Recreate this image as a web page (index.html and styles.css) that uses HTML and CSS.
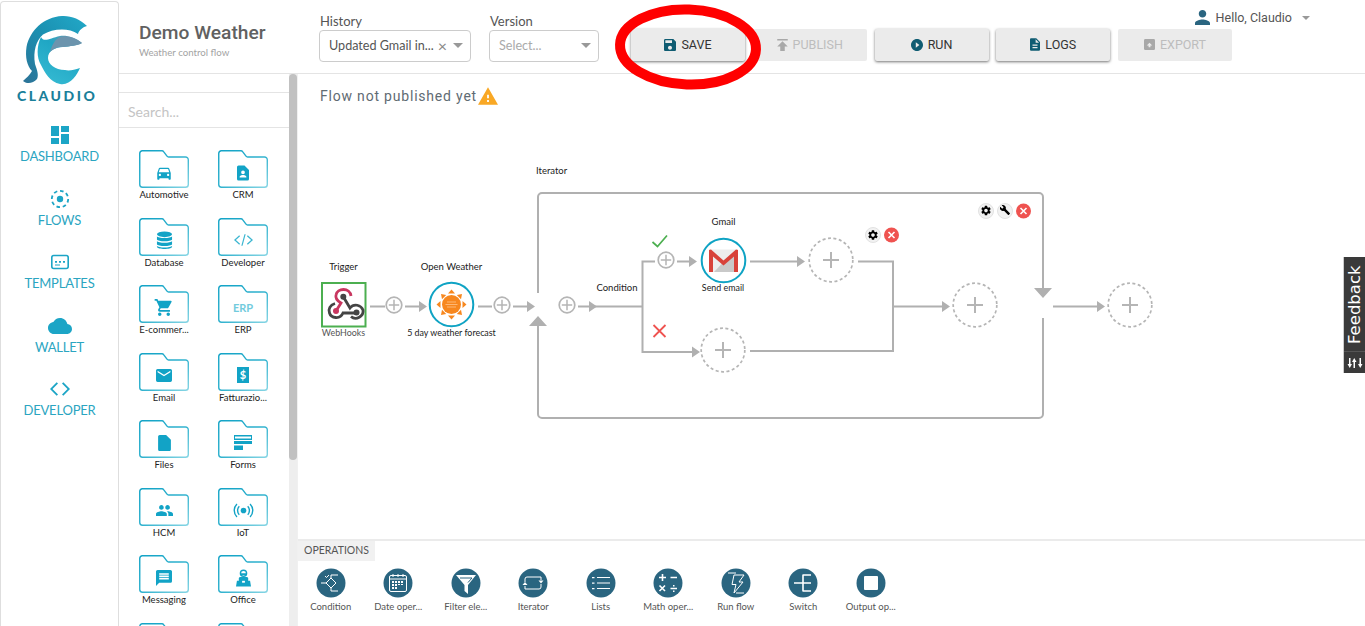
FILE: index.html
```html
<!DOCTYPE html>
<html lang="en">
<head>
<meta charset="utf-8">
<title>Demo Weather</title>
<link rel="stylesheet" href="styles.css">
</head>
<body>
<svg class="defs" width="0" height="0" aria-hidden="true">
  <defs>
    <linearGradient id="folderStroke" x1="0" y1="0" x2="1" y2="1">
      <stop offset="0" stop-color="#12a3c6"/><stop offset="0.5" stop-color="#2cb0cd"/><stop offset="1" stop-color="#86d5e4"/>
    </linearGradient>
    <linearGradient id="logoA" x1="1" y1="0" x2="0" y2="1">
      <stop offset="0" stop-color="#22a9c8"/><stop offset="0.5" stop-color="#1b8fb0"/><stop offset="1" stop-color="#2d7397"/>
    </linearGradient>
    <linearGradient id="logoB" x1="0.9" y1="0" x2="0.4" y2="1">
      <stop offset="0" stop-color="#6f9bb3"/><stop offset="0.35" stop-color="#1fa6c4"/><stop offset="1" stop-color="#33b8d1"/>
    </linearGradient>
    <symbol id="folder" viewBox="0 0 50 38">
      <path class="folder-line" d="M3 .75H23a2 2 0 0 1 1.6.9L28 6.2a2 2 0 0 0 1.6.8H46.5A2.8 2.8 0 0 1 49.3 9.8V34.5a2.8 2.8 0 0 1-2.8 2.8H3.5A2.8 2.8 0 0 1 .75 34.5V3.5A2.8 2.8 0 0 1 3 .75Z"/>
    </symbol>
    <symbol id="add" viewBox="0 0 18 18">
      <circle class="add-ring" cx="9" cy="9" r="7.8"/>
      <path class="add-cross" d="M9 3.8v10.4M3.8 9h10.4"/>
    </symbol>
    <symbol id="slot" viewBox="0 0 46 46">
      <circle class="slot-ring" cx="23" cy="23" r="21.8"/>
      <path class="slot-cross" d="M23 15v16M15 23h16"/>
    </symbol>
    <symbol id="gear" viewBox="0 0 24 24">
      <path d="M19.14 12.94c.04-.3.06-.61.06-.94 0-.32-.02-.64-.07-.94l2.03-1.58a.49.49 0 0 0 .12-.61l-1.92-3.32a.488.488 0 0 0-.59-.22l-2.39.96c-.5-.38-1.03-.7-1.62-.94l-.36-2.54a.484.484 0 0 0-.48-.41h-3.84c-.24 0-.43.17-.47.41l-.36 2.54c-.59.24-1.13.57-1.62.94l-2.39-.96c-.22-.08-.47 0-.59.22L2.74 8.87c-.12.21-.08.47.12.61l2.03 1.58c-.05.3-.09.63-.09.94s.02.64.07.94l-2.03 1.58a.49.49 0 0 0-.12.61l1.92 3.32c.12.22.37.29.59.22l2.39-.96c.5.38 1.03.7 1.62.94l.36 2.54c.05.24.24.41.48.41h3.84c.24 0 .44-.17.47-.41l.36-2.54c.59-.24 1.13-.56 1.62-.94l2.39.96c.22.08.47 0 .59-.22l1.92-3.32c.12-.22.07-.47-.12-.61l-2.01-1.58zM12 15.6c-1.98 0-3.6-1.62-3.6-3.6s1.62-3.6 3.6-3.6 3.6 1.62 3.6 3.6-1.62 3.6-3.6 3.6z"/>
    </symbol>
  </defs>
</svg>

<div class="app">
  <aside class="sidebar">
    <div class="brand">
      <svg class="logo" viewBox="22 14 68 70" width="68" height="70">
        <path fill="url(#logoA)" d="M87 25C80 18 71 14.500 62 15 44 16 30 29 26.500 46 25 56 27 65 32 70 30 74 26 77 23 80 26 83 33 83 37 78 39 74 37 69 35 63 33 50 36 40 43 33.500 52 28 68 26 78 33 79 29 83 26 87 25Z"/>
        <path fill="url(#logoB)" d="M82 42C75 36 66 34 60 35 50 37 44 42 41 36 37 44 36 56 41 64 45 72 50 81 60 83 70 85 77 74 80 67 74 69 69 70 65 69 55 69 48 63 48 57 48 50 55 46 63 46 70 45 77 45 82 42Z"/>
        <path class="logo-hi" d="M60 36C66 34 75 36 82 42 77 45 70 45 63 46 57 46 53 48 50 51 52 44 55 38 60 36Z"/>
      </svg>
      <div class="brand-name">CLAUDIO</div>
    </div>
    <nav class="nav">
      <a class="nav-item"><svg class="nav-icon" viewBox="3 3 18 18" width="18" height="18"><path d="M3 13h8V3H3v10zm0 8h8v-6H3v6zm10 0h8V11h-8v10zm0-18v6h8V3h-8z"/></svg><span>DASHBOARD</span></a>
      <a class="nav-item"><svg class="nav-icon" viewBox="0 0 20 20" width="20" height="20"><circle class="nav-dash" cx="10" cy="10" r="8.2"/><circle cx="10" cy="10" r="3.2"/></svg><span>FLOWS</span></a>
      <a class="nav-item"><svg class="nav-icon" viewBox="0 0 20 20" width="20" height="20"><rect class="nav-line" x="1.800" y="3.500" width="16.400" height="13" rx="2"/><path d="M5 9h2v1.800H5zM9 9h2v1.800H9zM13 9h2v1.800h-2zM5 12.500h5v1H5z"/></svg><span>TEMPLATES</span></a>
      <a class="nav-item"><svg class="nav-icon" viewBox="0 3 24 18" width="24" height="18"><path d="M19.35 10.040C18.670 6.590 15.640 4 12 4 9.110 4 6.600 5.640 5.350 8.040 2.340 8.360 0 10.910 0 14c0 3.310 2.690 6 6 6h13c2.760 0 5-2.240 5-5 0-2.640-2.050-4.780-4.650-4.960z"/></svg><span>WALLET</span></a>
      <a class="nav-item"><svg class="nav-icon" viewBox="0 0 20 20" width="20" height="20"><path d="M8 4.500 2.500 10 8 15.500l-1.300 1.200L0 10l6.700-6.700zM12 4.500 17.500 10 12 15.500l1.300 1.200L20 10l-6.700-6.700z"/></svg><span>DEVELOPER</span></a>
    </nav>
  </aside>

  <div class="content">
    <header class="topbar">
      <div class="title-block">
        <h1 class="flow-title">Demo Weather</h1>
        <p class="flow-sub">Weather control flow</p>
      </div>
      <div class="field field-history">
        <label class="field-label">History</label>
        <div class="select"><span class="select-value">Updated Gmail in...</span><span class="select-clear">×</span><span class="caret"></span></div>
      </div>
      <div class="field field-version">
        <label class="field-label">Version</label>
        <div class="select"><span class="select-value placeholder">Select...</span><span class="caret"></span></div>
      </div>
      <div class="actions">
        <div class="user">
          <svg class="user-icon" viewBox="4 4 16 16" width="15" height="15"><path d="M12 12c2.210 0 4-1.790 4-4s-1.790-4-4-4-4 1.790-4 4 1.790 4 4 4zm0 2c-2.670 0-8 1.340-8 4v2h16v-2c0-2.660-5.330-4-8-4z"/></svg>
          <span>Hello, Claudio</span>
          <span class="caret caret-small"></span>
        </div>
        <div class="buttons">
          <button class="btn"><svg viewBox="3 3 18 18" width="12" height="12"><path d="M17 3H5c-1.110 0-2 .9-2 2v14c0 1.100.89 2 2 2h14c1.100 0 2-.9 2-2V7l-4-4zm-5 16c-1.660 0-3-1.340-3-3s1.340-3 3-3 3 1.340 3 3-1.340 3-3 3zm3-10H5V5h10v4z"/></svg>SAVE</button>
          <button class="btn btn-off"><svg viewBox="5 4 14 16" width="11" height="12"><path d="M5 4v2h14V4H5zm0 10h4v6h6v-6h4l-7-7-7 7z"/></svg>PUBLISH</button>
          <button class="btn"><svg viewBox="2 2 20 20" width="12" height="12"><path d="M12 2C6.480 2 2 6.480 2 12s4.480 10 10 10 10-4.480 10-10S17.520 2 12 2zm-2 14.500v-9l6 4.500-6 4.500z"/></svg>RUN</button>
          <button class="btn"><svg viewBox="4 2 16 20" width="10" height="13"><path d="M14 2H6c-1.100 0-1.990.9-1.990 2L4 20c0 1.100.89 2 1.990 2H18c1.100 0 2-.9 2-2V8l-6-6zm2 16H8v-2h8v2zm0-4H8v-2h8v2zm-3-5V3.500L18.500 9H13z"/></svg>LOGS</button>
          <button class="btn btn-off"><svg viewBox="0 0 12 12" width="11" height="11"><path d="M1.500 0h9A1.500 1.500 0 0 1 12 1.500v9a1.500 1.500 0 0 1-1.500 1.500h-9A1.500 1.500 0 0 1 0 10.500v-9A1.500 1.500 0 0 1 1.500 0z"/><path class="export-mark" d="M6 4 3 7h2v2h2V7h2z"/></svg>EXPORT</button>
        </div>
      </div>
    </header>

    <div class="workspace">
      <section class="palette">
        <div class="palette-body">
          <div class="search">Search...</div>
          <div class="cats">
            <div class="cat"><div class="folder"><svg class="folder-svg"><use href="#folder"/></svg><svg class="cat-icon" viewBox="0 0 24 24" width="18" height="18"><path d="M18.920 6.010C18.720 5.420 18.160 5 17.500 5h-11c-.66 0-1.210.42-1.420 1.010L3 12v8c0 .55.45 1 1 1h1c.55 0 1-.45 1-1v-1h12v1c0 .55.45 1 1 1h1c.55 0 1-.45 1-1v-8l-2.080-5.990zM6.500 16c-.83 0-1.500-.67-1.500-1.500S5.670 13 6.500 13s1.500.67 1.500 1.500S7.330 16 6.500 16zm11 0c-.83 0-1.500-.67-1.500-1.500s.67-1.500 1.500-1.500 1.500.67 1.500 1.500-.67 1.500-1.500 1.500zM5 11l1.500-4.500h11L19 11H5z"/></svg></div><span class="cat-name">Automotive</span></div>
            <div class="cat"><div class="folder"><svg class="folder-svg"><use href="#folder"/></svg><svg class="cat-icon" viewBox="0 0 24 24" width="18" height="18"><path fill-rule="evenodd" d="M6 2h8l6 6v12a2 2 0 0 1-2 2H6a2 2 0 0 1-2-2V4a2 2 0 0 1 2-2zm6 6.500a2.500 2.500 0 1 0 0 5 2.500 2.500 0 0 0 0-5zM7.500 18h9v-1c0-1.700-3-2.500-4.500-2.500S7.500 15.300 7.500 17z"/></svg></div><span class="cat-name">CRM</span></div>
            <div class="cat"><div class="folder"><svg class="folder-svg"><use href="#folder"/></svg><svg class="cat-icon" viewBox="0 0 18 20" width="17" height="19"><ellipse cx="9" cy="3.500" rx="8" ry="3"/><path d="M1 5.500C2 8 16 8 17 5.500V9c-1 2.500-15 2.500-16 0zM1 10.500C2 13 16 13 17 10.500V14c-1 2.500-15 2.500-16 0zM1 15.500C2 18 16 18 17 15.500V17c-1 2.800-15 2.800-16 0z"/></svg></div><span class="cat-name">Database</span></div>
            <div class="cat"><div class="folder"><svg class="folder-svg"><use href="#folder"/></svg><svg class="cat-icon cat-icon-light" viewBox="0 0 20 12" width="19" height="12"><path d="M5.500 1 0 6l5.500 5 .9-1L2 6l4.400-4zM14.500 1 20 6l-5.500 5-.9-1L18 6l-4.400-4zM11 0h1.300L9 12H7.700z"/></svg></div><span class="cat-name">Developer</span></div>
            <div class="cat"><div class="folder"><svg class="folder-svg"><use href="#folder"/></svg><svg class="cat-icon" viewBox="1 2 22 20" width="20" height="17"><path d="M7 18c-1.100 0-1.990.9-1.990 2S5.900 22 7 22s2-.9 2-2-.9-2-2-2zM1 2v2h2l3.600 7.590-1.350 2.450c-.16.28-.25.61-.25.96 0 1.100.9 2 2 2h12v-2H7.420c-.14 0-.25-.11-.25-.25l.03-.12.9-1.630h7.450c.75 0 1.410-.41 1.750-1.030l3.580-6.490c.08-.14.12-.31.12-.48 0-.55-.45-1-1-1H5.210l-.94-2H1zm16 16c-1.100 0-1.990.9-1.990 2s.89 2 1.990 2 2-.9 2-2-.9-2-2-2z"/></svg></div><span class="cat-name">E-commer...</span></div>
            <div class="cat"><div class="folder"><svg class="folder-svg"><use href="#folder"/></svg><span class="cat-text">ERP</span></div><span class="cat-name">ERP</span></div>
            <div class="cat"><div class="folder"><svg class="folder-svg"><use href="#folder"/></svg><svg class="cat-icon" viewBox="2 4 20 16" width="16" height="13"><path d="M20 4H4c-1.100 0-1.990.9-1.990 2L2 18c0 1.100.9 2 2 2h16c1.100 0 2-.9 2-2V6c0-1.100-.9-2-2-2zm0 4l-8 5-8-5V6l8 5 8-5v2z"/></svg></div><span class="cat-name">Email</span></div>
            <div class="cat"><div class="folder"><svg class="folder-svg"><use href="#folder"/></svg><svg class="cat-icon" viewBox="0 0 12 16" width="12" height="16"><path d="M0 0h12v16H0z"/><text class="dollar" x="6" y="12">$</text></svg></div><span class="cat-name">Fatturazio...</span></div>
            <div class="cat"><div class="folder"><svg class="folder-svg"><use href="#folder"/></svg><svg class="cat-icon" viewBox="4 2 16 20" width="13" height="16"><path d="M6 2c-1.100 0-1.990.9-1.990 2L4 20c0 1.100.89 2 1.990 2H18c1.100 0 2-.9 2-2V8l-6-6H6z"/></svg></div><span class="cat-name">Files</span></div>
            <div class="cat"><div class="folder"><svg class="folder-svg"><use href="#folder"/></svg><svg class="cat-icon" viewBox="0 0 18 15" width="18" height="15"><path fill-rule="evenodd" d="M0 0h18v5H0zm1 1.500v2h16v-2zM0 6h18v3H0zM0 10.500h9V15H0z"/></svg></div><span class="cat-name">Forms</span></div>
            <div class="cat"><div class="folder"><svg class="folder-svg"><use href="#folder"/></svg><svg class="cat-icon" viewBox="1 5 22 14" width="17" height="11"><path d="M16 11c1.660 0 2.990-1.340 2.990-3S17.660 5 16 5c-1.660 0-3 1.340-3 3s1.340 3 3 3zm-8 0c1.660 0 2.990-1.340 2.990-3S9.660 5 8 5C6.340 5 5 6.340 5 8s1.340 3 3 3zm0 2c-2.330 0-7 1.170-7 3.500V19h14v-2.500c0-2.330-4.670-3.500-7-3.500zm8 0c-.29 0-.62.02-.97.05 1.160.84 1.970 1.970 1.970 3.450V19h6v-2.500c0-2.330-4.670-3.500-7-3.500z"/></svg></div><span class="cat-name">HCM</span></div>
            <div class="cat"><div class="folder"><svg class="folder-svg"><use href="#folder"/></svg><svg class="cat-icon cat-iot" viewBox="0 0 20 16" width="19" height="15"><circle cx="10" cy="8" r="3"/><path class="iot-line" d="M5.500 3.500a6.500 6.500 0 0 0 0 9M14.500 3.500a6.500 6.500 0 0 1 0 9M3 1a10 10 0 0 0 0 14M17 1a10 10 0 0 1 0 14"/></svg></div><span class="cat-name">IoT</span></div>
            <div class="cat"><div class="folder"><svg class="folder-svg"><use href="#folder"/></svg><svg class="cat-icon" viewBox="2 2 20 20" width="16" height="16"><path d="M20 2H4c-1.100 0-1.990.9-1.990 2L2 22l4-4h14c1.100 0 2-.9 2-2V4c0-1.100-.9-2-2-2zm-2 12H6v-2h12v2zm0-3H6V9h12v2zm0-3H6V6h12v2z"/></svg></div><span class="cat-name">Messaging</span></div>
            <div class="cat"><div class="folder"><svg class="folder-svg"><use href="#folder"/></svg><svg class="cat-icon" viewBox="0 0 16 18" width="15" height="18"><circle class="iot-line" cx="8" cy="4" r="3.300"/><path d="M5 4h6v2H5zM4 8h8l1 1v3h2l1 6H0l1-6h2V9z"/><rect class="cat-hole" x="6.500" y="12" width="3" height="2"/></svg></div><span class="cat-name">Office</span></div>
            <div class="cat"><div class="folder"><svg class="folder-svg"><use href="#folder"/></svg></div><span class="cat-name">&nbsp;</span></div>
            <div class="cat"><div class="folder"><svg class="folder-svg"><use href="#folder"/></svg></div><span class="cat-name">&nbsp;</span></div>
          </div>
        </div>
        <div class="scrollbar"><div class="scrollbar-thumb"></div></div>
      </section>

      <main class="main">
        <div class="canvas">
          <p class="status">Flow not published yet<svg class="status-icon" viewBox="1 2 22 19" width="20" height="18"><path d="M1 21h22L12 2 1 21zm12-3h-2v-2h2v2zm0-4h-2v-4h2v4z"/></svg></p>
          <svg class="diagram" viewBox="297 74 1068 466" width="1068" height="466">
            <!-- iterator frame -->
            <path class="wire" d="M538 293V197a4 4 0 0 1 4-4H1039a4 4 0 0 1 4 4V290M538 325V414a4 4 0 0 0 4 4H1039a4 4 0 0 0 4-4V318"/>
            <path class="tip" d="M538 316l9 10h-18zM1043 298l-9-10h18z"/>
            <!-- wires -->
            <path class="wire" d="M370 306.500H385M405 306.500H420M478 306.500H492M513 306.500H527M578 306.500H642.500M655 261.500H642.500V352H692M677 261.500H690M750 261.500H797M858 261.500H893V351H750M893 306.500H942M1053 306.500H1097"/>
            <path class="tip" d="M427 306.500l-8-5.500v11zM535 306.500l-8-5.500v11zM597 306.500l-8-5.500v11zM697 261.500l-8-5.500v11zM805 261.500l-8-5.500v11zM700 352l-8-5.500v11zM950 306.500l-8-5.500v11zM1105 306.500l-8-5.500v11z"/>
            <!-- add buttons -->
            <use href="#add" x="385" y="296" width="18" height="18"/>
            <use href="#add" x="493" y="296" width="18" height="18"/>
            <use href="#add" x="558" y="296" width="18" height="18"/>
            <use href="#add" x="657" y="251" width="18" height="18"/>
            <!-- empty slots -->
            <use href="#slot" x="808" y="237" width="46" height="46"/>
            <use href="#slot" x="700" y="327" width="46" height="46"/>
            <use href="#slot" x="952" y="282" width="46" height="46"/>
            <use href="#slot" x="1107" y="282" width="46" height="46"/>
            <!-- webhooks -->
            <rect class="trigger-box" x="322" y="283" width="43.500" height="43.500"/>
            <path class="hook-pink" d="M336 311 341 303C336 300 335.500 297 336 295 337 288 350 287 351 296"/>
            <circle class="hook-pink-fill" cx="336" cy="311" r="3"/>
            <path class="hook-dark" d="M335 303.500C330 305 328 309 329.500 313 331 318 340 320 343 313H356"/>
            <path class="hook-dark" d="M343.300 296.700 350 308C354 303 361 305 363 310 364 316 356 321 351 316.500"/>
            <circle class="hook-dark-fill" cx="343.300" cy="296.700" r="3"/>
            <circle class="hook-dark-fill" cx="356.500" cy="312.500" r="3"/>
            <!-- open weather -->
            <circle class="node-ring" cx="451.500" cy="304.500" r="21.800"/>
            <g class="sun">
              <circle cx="451.500" cy="304.500" r="9.500"/>
              <path d="M451.500 289.500l3.500 4h-7zM451.500 319.500l3.500-4h-7zM436.500 304.500l4-3.500v7zM466.500 304.500l-4-3.500v7zM441 294l5.200 1-4.200 4.200zM462 294l-5.200 1 4.200 4.200zM441 315l5.200-1-4.200-4.200zM462 315l-5.200-1 4.200-4.200z"/>
            </g>
            <path class="sun-lines" d="M447 302h9M445.500 304.500h12M447 307h9"/>
            <!-- gmail -->
            <circle class="node-ring" cx="723.500" cy="260.500" r="21.800"/>
            <path class="gm-back" d="M709 249.500h29v22.500h-29z"/>
            <path class="gm-shade" d="M714 272l9.500-10 14.500-9v19z"/>
            <path class="gm-red" d="M709 272v-22l2 -.5 12.500 11 12.500-11 2 .5v22h-4v-15.500l-10.500 9-10.500-9V272z"/>
            <!-- condition marks -->
            <path class="mark-ok" d="M652.500 242l5 4.500 9.500-11"/>
            <path class="mark-no" d="M653.500 325l12 12M665.500 325l-12 12"/>
            <!-- toolbars -->
            <g class="tool"><circle cx="873" cy="235" r="7.500"/><use href="#gear" x="867" y="229" width="12" height="12"/></g>
            <g class="tool-del"><circle cx="891.500" cy="235" r="7.500"/><path d="M888.500 232l6 6M894.500 232l-6 6"/></g>
            <g class="tool"><circle cx="986" cy="211" r="7.500"/><use href="#gear" x="980" y="204.500" width="12" height="12"/></g>
            <g class="tool"><circle cx="1005" cy="211" r="7.500"/><svg x="999.500" y="204.500" width="11" height="11" viewBox="0 0 24 24"><path d="M22.700 19l-9.100-9.100c.9-2.300.4-5-1.500-6.900-2-2-5-2.400-7.400-1.300L9 6 6 9 1.600 4.700C.4 7.100.9 10.100 2.900 12.100c1.900 1.900 4.600 2.400 6.900 1.500l9.100 9.100c.4.4 1 .4 1.400 0l2.300-2.300c.5-.4.5-1.100.1-1.400z"/></svg></g>
            <g class="tool-del"><circle cx="1023.500" cy="211" r="7.500"/><path d="M1020.500 208l6 6M1026.500 208l-6 6"/></g>
            <!-- labels -->
            <text class="dia-label" x="536" y="174">Iterator</text>
            <text class="dia-label dia-mid" x="343.500" y="270">Trigger</text>
            <text class="dia-label dia-mid dia-sub dia-grey" x="343.500" y="336">WebHooks</text>
            <text class="dia-label dia-mid" x="451.500" y="270">Open Weather</text>
            <text class="dia-label dia-mid dia-sub" x="451.500" y="336">5 day weather forecast</text>
            <text class="dia-label dia-mid" x="617" y="291">Condition</text>
            <text class="dia-label dia-mid" x="723.500" y="225">Gmail</text>
            <text class="dia-label dia-mid dia-sub" x="723" y="291">Send email</text>
          </svg>
        </div>
        <section class="ops">
          <div class="ops-tab">OPERATIONS</div>
          <div class="ops-list">
            <div class="op"><svg class="op-icon" viewBox="0 0 30 30"><circle class="op-bg" cx="15" cy="15" r="14.500"/><path class="op-line" d="M5 15h5M10 15l5-5 5 5-5 5zM15 10V7h7M15 20v3h7M9 8l1.500 1.500L13 7"/></svg><span class="op-name">Condition</span></div>
            <div class="op"><svg class="op-icon" viewBox="0 0 30 30"><circle class="op-bg" cx="15" cy="15" r="14.500"/><rect class="op-line" x="6.500" y="7.500" width="17" height="16" rx="1.500"/><path class="op-line" d="M6.500 11h17M10 6v3M15 6v3M20 6v3"/><path class="op-fill" d="M9 13h2v2H9zM12 13h2v2h-2zM15 13h2v2h-2zM18 13h2v2h-2zM9 16h2v2H9zM12 16h2v2h-2zM15 16h2v1h-2zM18 16h2v1h-2zM9 19h2v2H9zM12 19h2v2h-2z"/></svg><span class="op-name">Date oper...</span></div>
            <div class="op"><svg class="op-icon" viewBox="0 0 30 30"><circle class="op-bg" cx="15" cy="15" r="14.500"/><path class="op-fill" d="M5 7h20l-8 10v9l-3.500-3v-6z"/><path class="op-cut" d="M9 10h12l-4 4.500"/></svg><span class="op-name">Filter ele...</span></div>
            <div class="op"><svg class="op-icon" viewBox="0 0 30 30"><circle class="op-bg" cx="15" cy="15" r="14.500"/><path class="op-line" d="M7 14v-3a2 2 0 0 1 2-2h14v3M23 16v3a2 2 0 0 1-2 2H7v-3"/><path class="op-fill" d="M4.500 17h5L7 14zM20.500 12.500h5L23 15.500z"/></svg><span class="op-name">Iterator</span></div>
            <div class="op"><svg class="op-icon" viewBox="0 0 30 30"><circle class="op-bg" cx="15" cy="15" r="14.500"/><path class="op-line" d="M11 9.500h13M11 15h13M11 20.500h13"/><path class="op-fill" d="M6 9h2.500v1.200H6zM6 14.500h2.500v1.200H6zM6 20h2.500v1.200H6z"/></svg><span class="op-name">Lists</span></div>
            <div class="op"><svg class="op-icon" viewBox="0 0 30 30"><circle class="op-bg" cx="15" cy="15" r="14.500"/><path class="op-line op-thick" d="M6 9.500h7M9.500 6v7M17.500 9.500h6.500M6.500 17.500l5.500 5.500M12 17.500l-5.500 5.500M17.500 20.500h6.500"/><path class="op-fill" d="M20 17h1.500v1.500H20zM20 22.500h1.500V24H20z"/></svg><span class="op-name">Math oper...</span></div>
            <div class="op"><svg class="op-icon" viewBox="0 0 30 30"><circle class="op-bg" cx="15" cy="15" r="14.500"/><path class="op-line" d="M13 7h10l-5 7h4l-9 11 2-8.500H11zM7 5h8M15 25h8" /></svg><span class="op-name">Run flow</span></div>
            <div class="op"><svg class="op-icon" viewBox="0 0 30 30"><circle class="op-bg" cx="15" cy="15" r="14.500"/><path class="op-line op-thick" d="M6 15h9M15 6.500v17M15 7h8M15 15h8M15 23h8"/></svg><span class="op-name">Switch</span></div>
            <div class="op"><svg class="op-icon" viewBox="0 0 30 30"><circle class="op-bg" cx="15" cy="15" r="14.500"/><rect class="op-fill" x="8" y="8" width="14" height="14" rx="1"/></svg><span class="op-name">Output op...</span></div>
          </div>
        </section>
      </main>
    </div>
  </div>
</div>

<svg class="highlight" viewBox="0 0 150 90" width="150" height="90"><ellipse cx="75" cy="44" rx="68" ry="37.500" transform="rotate(2 75 44)"/></svg>

<div class="feedback">
  <span class="feedback-text">Feedback</span>
  <span class="feedback-icon"><svg viewBox="0 0 16 10" width="16" height="10"><path d="M2 0h1.500v6H5L2.750 10 .5 6H2zM8 10H6.500V4H5L7.250 0 9.500 4H8zM12.500 0H14v6h1.500l-2.250 4L11 6h1.500z"/></svg></span>
</div>
</body>
</html>
```
FILE: styles.css
```css
* { box-sizing: border-box; }
html, body { margin: 0; height: 626px; overflow: hidden; background: #fff; }
body { font-family: "Lato", sans-serif; position: relative; color: #333; }
.defs { position: absolute; }
.app { display: flex; height: 626px; }

/* sidebar */
.sidebar { width: 119px; flex: none; margin-top: 1px; border: 1px solid #dedede; border-bottom: 0; border-radius: 4px 4px 0 0; }
.brand { display: flex; flex-direction: column; align-items: flex-start; padding: 13px 0 0 21px; }
.logo { display: block; }
.logo-hi { fill: #6c94ad; }
.brand-name { margin: 3px 0 0 -5px; font-weight: 900; font-size: 14px; line-height: 16px; letter-spacing: 2.500px; color: #1a7f9a; }
.nav { display: flex; flex-direction: column; margin-top: 21px; }
.nav-item { height: 63.500px; display: flex; flex-direction: column; align-items: center; color: #2ba5c1; font-size: 13px; letter-spacing: -.2px; line-height: 18px; }
.nav-icon { fill: #1ca5c6; height: 20px; margin-bottom: 2px; display: block; }
.nav-dash { fill: none; stroke: #1ca5c6; stroke-width: 1.800; stroke-dasharray: 3.600 2.800; }
.nav-line { fill: none; stroke: #1ca5c6; stroke-width: 1.600; }

/* topbar */
.content { flex: 1; min-width: 0; display: flex; flex-direction: column; }
.topbar { height: 74px; flex: none; display: flex; border-bottom: 1px solid #e4e4e4; }
.title-block { width: 200px; flex: none; padding: 21px 0 0 20px; }
.flow-title { margin: 0; font: 500 19.200px/24px "Roboto", sans-serif; color: #616161; }
.flow-sub { margin: 1px 0 0; font-size: 9.700px; line-height: 12px; color: #a3a3a3; }
.field { flex: none; padding-top: 13px; }
.field-history { width: 152px; margin-right: 18px; }
.field-version { width: 110px; margin-right: 32px; }
.field-label { display: block; font-size: 13px; line-height: 16px; color: #555; padding-left: 1px; }
.select { height: 32px; margin-top: 1px; display: flex; align-items: center; padding: 0 7px 2px 9px; border: 1px solid #ccc; border-radius: 4px; font-size: 12.600px; color: #555; }
.select-value { flex: 1; white-space: nowrap; }
.placeholder { color: #aaa; }
.select-clear { color: #888; font-size: 16px; margin-right: 6px; }
.caret { width: 0; height: 0; border-left: 5px solid transparent; border-right: 5px solid transparent; border-top: 5px solid #999; }
.caret-small { border-left-width: 4px; border-right-width: 4px; border-top-width: 4px; margin-left: 4px; }
.actions { flex: 1; min-width: 0; display: flex; flex-direction: column; }
.user { height: 29px; padding: 6px 55px 0 0; display: flex; justify-content: flex-end; align-items: center; font: 12.500px/15px "Roboto", sans-serif; color: #555; gap: 6px; }
.user-icon { fill: #2a6580; }
.buttons { display: flex; gap: 7.750px; }
.btn { width: 114px; height: 32px; padding: 0 0 1px; border: 0; border-radius: 2px; background: #ebebeb; display: flex; align-items: center; justify-content: center; gap: 5px; font: 12.500px "Roboto", sans-serif; color: #333; box-shadow: 0 1px 3px rgba(0,0,0,.55); }
.btn svg { fill: #0f5c72; }
.btn-off { color: #bdbdbd; box-shadow: none; }
.btn-off svg { fill: #a8a8a8; }
.export-mark { fill: #ebebeb; }

/* palette */
.workspace { flex: 1; min-height: 0; display: flex; }
.palette { width: 178px; flex: none; display: flex; }
.palette-body { flex: 1; min-width: 0; overflow: hidden; padding-top: 18px; }
.search { height: 36px; padding: 0 0 0 9px; border-top: 1px solid #e4e4e4; border-bottom: 1px solid #e4e4e4; font-size: 14px; line-height: 38px; color: #c4c4c4; }
.cats { display: grid; grid-template-columns: 50px 50px; grid-auto-rows: 67.500px; column-gap: 29px; padding: 22px 0 0 20px; }
.cat { display: flex; flex-direction: column; align-items: center; }
.folder { position: relative; width: 50px; height: 38px; display: flex; align-items: center; justify-content: center; padding-top: 7px; }
.folder-svg { position: absolute; left: 0; top: 0; width: 50px; height: 38px; }
.folder-line { fill: none; stroke: url(#folderStroke); stroke-width: 1.400; }
.cat-icon { fill: #12a3c6; position: relative; }
.cat-icon-light { fill: #3cb6d1; }
.cat-iot { overflow: visible; }
.iot-line { fill: none; stroke: #12a3c6; stroke-width: 1.500; }
.cat-hole { fill: #fff; }
.dollar { fill: #fff; font: 700 11px "Lato", sans-serif; text-anchor: middle; }
.cat-text { position: relative; font-size: 11px; font-weight: 700; color: #72cbdd; }
.cat-name { font-size: 9.500px; line-height: 14px; color: #222; white-space: nowrap; }
.scrollbar { width: 8px; flex: none; background: #eee; }
.scrollbar-thumb { height: 386px; background: #c1c1c1; border-radius: 4px; }

/* main */
.main { flex: 1; min-width: 0; display: flex; flex-direction: column; border-left: 1px solid #f0f0f0; }
.canvas { position: relative; flex: 1; min-height: 0; overflow: hidden; }
.status { position: relative; z-index: 1; margin: 12px 0 0 22px; display: flex; align-items: center; gap: 1px; font: 14px/20px "Roboto", sans-serif; letter-spacing: .8px; color: #5f6b73; }
.status-icon { fill: #f9a825; }
.diagram { position: absolute; left: -1px; top: 0; }
.wire { fill: none; stroke: #b0b0b0; stroke-width: 2; }
.tip { fill: #b0b0b0; }
.add-ring { fill: #fff; stroke: #b5b5b5; stroke-width: 1.700; }
.add-cross { stroke: #b5b5b5; stroke-width: 1.500; }
.slot-ring { fill: #fff; stroke: #b5b5b5; stroke-width: 1.700; stroke-dasharray: 3 2.500; }
.slot-cross { stroke: #b5b5b5; stroke-width: 2; }
.trigger-box { fill: #fff; stroke: #4caf50; stroke-width: 2; }
.hook-pink { fill: none; stroke: #c8365f; stroke-width: 2.800; }
.hook-pink-fill { fill: #c8365f; }
.hook-dark { fill: none; stroke: #444; stroke-width: 2.800; }
.hook-dark-fill { fill: #444; }
.node-ring { fill: #fff; stroke: #0fa3c4; stroke-width: 2; }
.sun { fill: #f7871e; }
.sun-lines { stroke: #ffc48a; stroke-width: .8; }
.gm-back { fill: #ededed; }
.gm-shade { fill: #c9c9c9; }
.gm-red { fill: #d8423a; }
.mark-ok { fill: none; stroke: #4caf50; stroke-width: 1.700; }
.mark-no { fill: none; stroke: #ef5350; stroke-width: 1.800; }
.tool circle { fill: #f2f2f2; stroke: #e2e2e2; stroke-width: 1; }
.tool-del circle { fill: #ef5350; }
.tool-del path { stroke: #fff; stroke-width: 1.600; fill: none; }
.dia-label { font: 9.500px "Lato", sans-serif; fill: #222; }
.dia-mid { text-anchor: middle; }
.dia-sub { font-size: 8.900px; }
.dia-grey { fill: #555; }

/* operations */
.ops { height: 87px; flex: none; border-top: 2px solid #ebebeb; }
.ops-tab { width: 77px; height: 20px; background: #f1f1f1; font-size: 10.500px; line-height: 19px; text-align: center; color: #555; }
.ops-list { display: flex; padding-top: 7px; margin-left: -1px; }
.op { width: 67.500px; flex: none; display: flex; flex-direction: column; align-items: center; }
.op-icon { width: 30px; height: 30px; display: block; }
.op-bg { fill: #2a6580; }
.op-line { fill: none; stroke: #fff; stroke-width: 1; }
.op-thick { stroke-width: 1.600; }
.op-fill { fill: #fff; }
.op-cut { fill: none; stroke: #2a6580; stroke-width: 1; }
.op-name { margin-top: 2px; font-size: 9.500px; line-height: 14px; color: #555; white-space: nowrap; }

/* overlays */
.highlight { position: absolute; left: 613px; top: 3px; pointer-events: none; }
.highlight ellipse { fill: none; stroke: #f00; stroke-width: 10; }
.feedback { position: absolute; right: 0; top: 257px; width: 22px; height: 116px; display: flex; flex-direction: column; background: #3a3a3a; color: #fff; border-left: 1px solid #ccc; }
.feedback-text { flex: 1; writing-mode: vertical-rl; transform: rotate(180deg); font: 16.500px/21px "DejaVu Sans", sans-serif; text-align: left; padding-top: 7px; }
.feedback-icon { height: 22px; flex: none; display: flex; align-items: center; justify-content: center; border-top: 1px solid #555; }
.feedback-icon svg { fill: #fff; }
```
